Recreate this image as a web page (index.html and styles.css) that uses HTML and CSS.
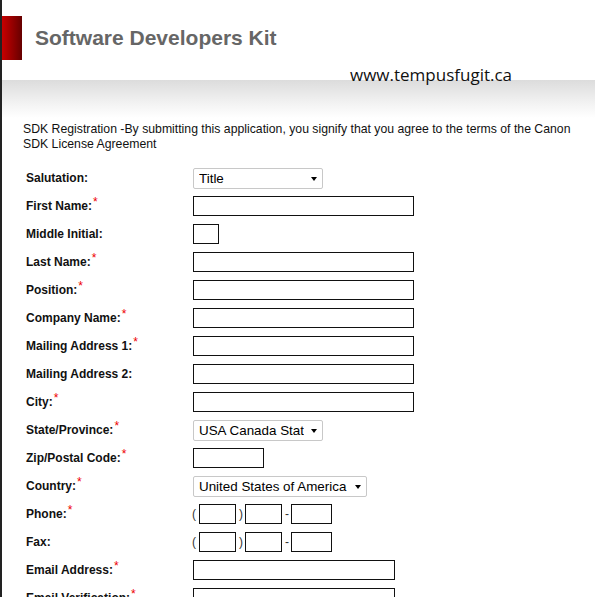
FILE: index.html
```html
<!DOCTYPE html>
<html>
<head>
<meta charset="utf-8">
<link rel="stylesheet" href="styles.css">
<title>SDK Registration</title>
</head>
<body>
<div class="page">
  <header class="header">
    <div class="brand">
      <div class="brand-mark"></div>
      <h1 class="brand-title">Software Developers Kit</h1>
    </div>
    <div class="site-url">www.tempusfugit.ca</div>
  </header>

  <p class="intro">SDK Registration -By submitting this application, you signify that you agree to the terms of the Canon SDK License Agreement</p>

  <form class="form">
    <label class="lbl">Salutation:</label>
    <div class="fld"><span class="sel w130"><select><option>Title</option></select></span></div>

    <label class="lbl">First Name:<span class="req">*</span></label>
    <div class="fld"><input class="txt w-full"></div>

    <label class="lbl">Middle Initial:</label>
    <div class="fld"><input class="txt w-mi"></div>

    <label class="lbl">Last Name:<span class="req">*</span></label>
    <div class="fld"><input class="txt w-full"></div>

    <label class="lbl">Position:<span class="req">*</span></label>
    <div class="fld"><input class="txt w-full"></div>

    <label class="lbl">Company Name:<span class="req">*</span></label>
    <div class="fld"><input class="txt w-full"></div>

    <label class="lbl">Mailing Address 1:<span class="req">*</span></label>
    <div class="fld"><input class="txt w-full"></div>

    <label class="lbl">Mailing Address 2:</label>
    <div class="fld"><input class="txt w-full"></div>

    <label class="lbl">City:<span class="req">*</span></label>
    <div class="fld"><input class="txt w-full"></div>

    <label class="lbl">State/Province:<span class="req">*</span></label>
    <div class="fld"><span class="sel w130"><select><option>USA Canada States</option></select></span></div>

    <label class="lbl">Zip/Postal Code:<span class="req">*</span></label>
    <div class="fld"><input class="txt w-zip"></div>

    <label class="lbl">Country:<span class="req">*</span></label>
    <div class="fld"><span class="sel w174"><select><option>United States of America</option></select></span></div>

    <label class="lbl">Phone:<span class="req">*</span></label>
    <div class="fld phone"><span class="p-open">(</span><input class="txt w-ph"><span class="p-close">)</span><input class="txt w-ph"><span class="p-dash">-</span><input class="txt w-ph2"></div>

    <label class="lbl">Fax:</label>
    <div class="fld phone"><span class="p-open">(</span><input class="txt w-ph"><span class="p-close">)</span><input class="txt w-ph"><span class="p-dash">-</span><input class="txt w-ph2"></div>

    <label class="lbl">Email Address:<span class="req">*</span></label>
    <div class="fld"><input class="txt w-email"></div>

    <label class="lbl">Email Verification:<span class="req">*</span></label>
    <div class="fld"><input class="txt w-email"></div>
  </form>
</div>
</body>
</html>
```

FILE: styles.css
```css
html, body {
  margin: 0;
  padding: 0;
  background: #fff;
}
body {
  font-family: "Liberation Sans", Arial, sans-serif;
  color: #000;
  overflow: hidden;
}
.page {
  border-left: 2px solid #222;
  min-height: 597px;
  box-sizing: border-box;
}
.header {
  height: 118px;
  box-sizing: border-box;
  padding-top: 16px;
  background: linear-gradient(to bottom, #fff 0, #fff 80px, #dcdcdc 80px, #f4f4f4 105px, #fff 118px);
}
.brand {
  display: flex;
  align-items: center;
  height: 44px;
}
.brand-mark {
  width: 20px;
  height: 44px;
  background: linear-gradient(to right, #c80000, #660000);
}
.brand-title {
  margin: 0 0 0 13px;
  font-size: 21px;
  font-weight: bold;
  color: #666;
}
.site-url {
  margin: 4px 0 0 348px;
  font-family: "Open Sans", sans-serif;
  font-size: 17px;
  line-height: 21px;
  color: #111;
}
.intro {
  margin: 4px 16px 0 21px;
  font-size: 12.25px;
  line-height: 15px;
  color: #111;
}
.form {
  margin-top: 12px;
  padding-left: 24px;
  display: grid;
  grid-template-columns: 167px auto;
  grid-auto-rows: 28px;
  align-items: center;
}
.lbl {
  font-size: 12px;
  font-weight: bold;
  color: #111;
  white-space: nowrap;
}
.req {
  color: #e00;
  font-weight: normal;
  font-size: 12px;
  position: relative;
  top: -4px;
  margin-left: 1px;
}
.fld {
  display: flex;
  align-items: center;
}
.txt {
  box-sizing: border-box;
  height: 20px;
  border: 1px solid #111;
  margin: 0;
  padding: 0 2px;
  background: #fff;
  font-size: 13px;
}
.w-full { width: 221px; }
.w-mi { width: 26px; }
.w-zip { width: 71px; }
.w-email { width: 202px; }
.w-ph { width: 37px; }
.w-ph2 { width: 41px; }

.phone {
  font-size: 12px;
  color: #333;
}
.p-open { margin-left: -1px; margin-right: 3px; }
.p-close { margin: 0 2px 0 3px; }
.p-dash { margin: 0 2px 0 3px; }

.sel {
  position: relative;
  display: inline-block;
}
.sel select {
  appearance: none;
  -webkit-appearance: none;
  box-sizing: border-box;
  height: 21px;
  width: 100%;
  margin: 0;
  border: 1px solid #c8c8c8;
  border-radius: 2px;
  background: #fff;
  padding: 0 18px 0 5px;
  font-family: "Liberation Sans", Arial, sans-serif;
  font-size: 13.4px;
  color: #000;
}
.sel::after {
  content: "";
  position: absolute;
  right: 6px;
  top: 9px;
  border-left: 3.5px solid transparent;
  border-right: 3.5px solid transparent;
  border-top: 4px solid #000;
  pointer-events: none;
}
.w130 { width: 130px; }
.w174 { width: 174px; }
```
